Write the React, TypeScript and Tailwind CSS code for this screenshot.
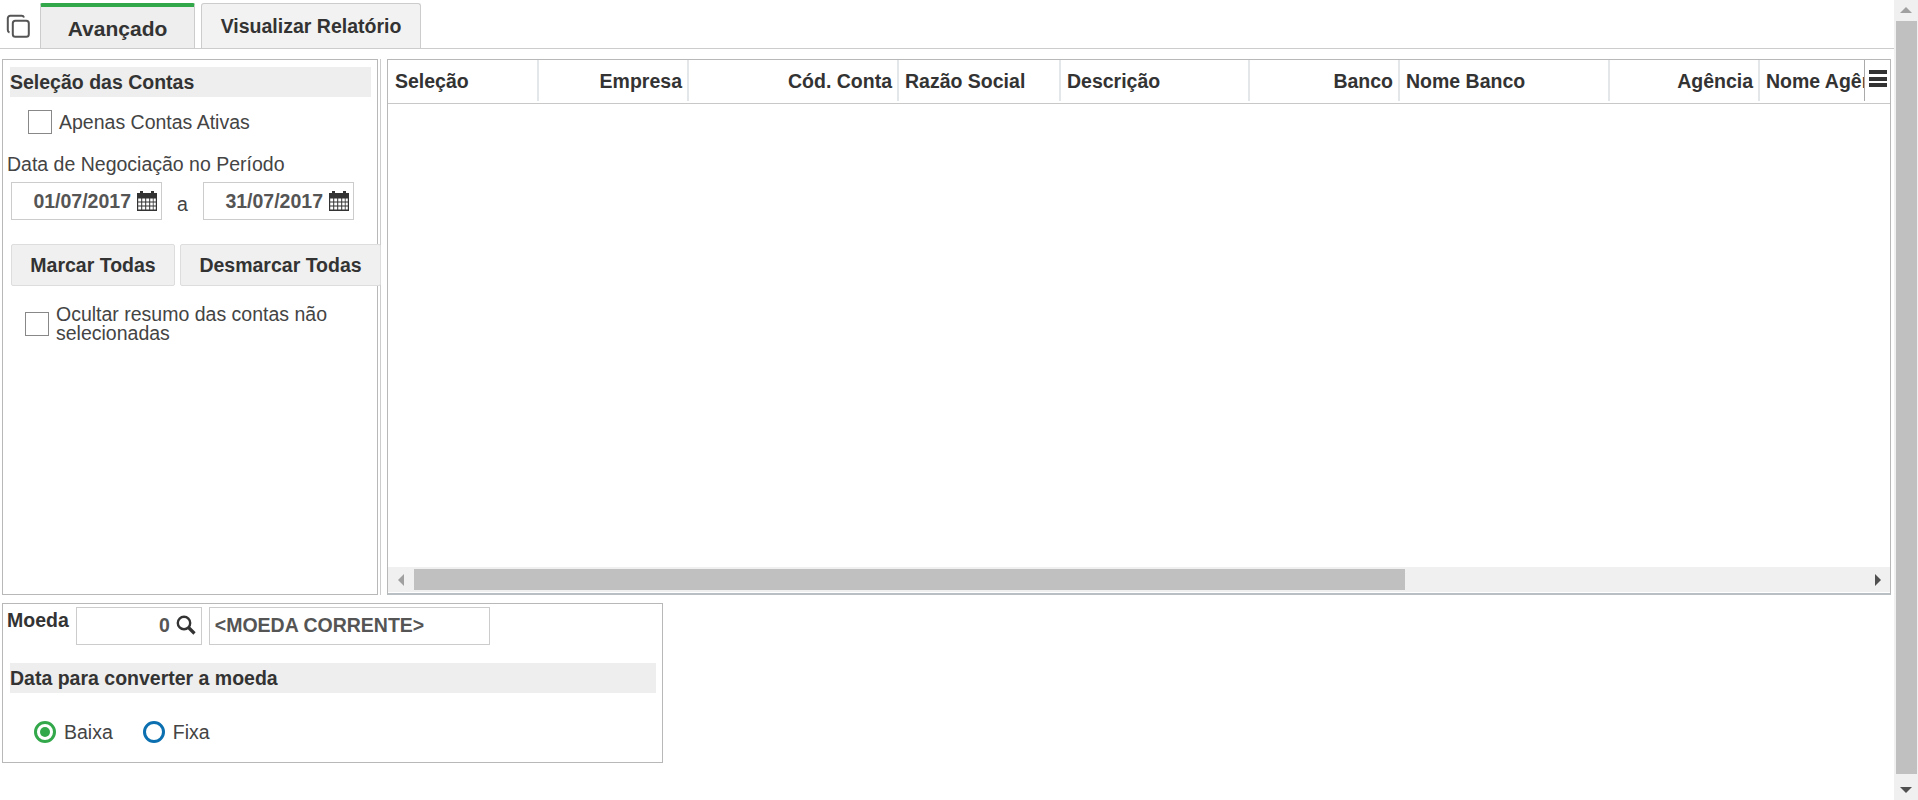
const columns = [
  { title: 'Seleção', width: 'w-[150px]', right: false },
  { title: 'Empresa', width: 'w-[150px]', right: true },
  { title: 'Cód. Conta', width: 'w-[210px]', right: true },
  { title: 'Razão Social', width: 'w-[162px]', right: false },
  { title: 'Descrição', width: 'w-[189px]', right: false },
  { title: 'Banco', width: 'w-[150px]', right: true },
  { title: 'Nome Banco', width: 'w-[210px]', right: false },
  { title: 'Agência', width: 'w-[150px]', right: true },
];

const CopyIcon = () => (
  <svg width="24" height="24" viewBox="0 0 24 24" fill="none" stroke="#555" strokeWidth="2" className="shrink-0">
    <rect x="6.8" y="6.8" width="16" height="16" rx="2.5" />
    <path d="M3.5 18.5 A2.5 2.5 0 0 1 1.8 16 V4.3 A2.5 2.5 0 0 1 4.3 1.8 H15.5 A2.5 2.5 0 0 1 18 3.5" />
  </svg>
);

const CalendarIcon = () => (
  <svg width="20" height="20" viewBox="0 0 20 20" fill="#333" className="shrink-0">
    <rect x="3" y="0" width="3" height="4" />
    <rect x="14" y="0" width="3" height="4" />
    <path
      d="M0 2h20v18H0z M1.2 7.5v3h3v-3z M5.2 7.5v3h3v-3z M9.2 7.5v3h3v-3z M13.2 7.5v3h2.6v-3z M16.6 7.5v3h2.2v-3z M1.2 11.5v3h3v-3z M5.2 11.5v3h3v-3z M9.2 11.5v3h3v-3z M13.2 11.5v3h2.6v-3z M16.6 11.5v3h2.2v-3z M1.2 15.5v3h3v-3z M5.2 15.5v3h3v-3z M9.2 15.5v3h3v-3z M13.2 15.5v3h2.6v-3z M16.6 15.5v3h2.2v-3z"
      fillRule="evenodd"
    />
  </svg>
);

const SearchIcon = () => (
  <svg width="20" height="20" viewBox="0 0 20 20" fill="none" stroke="#333" className="shrink-0">
    <circle cx="8" cy="8" r="6.2" strokeWidth="2.4" />
    <path d="M12.5 12.5 L18.5 18.5" strokeWidth="3.2" />
  </svg>
);

const DateField = ({ value }: { value: string }) => (
  <div className="flex h-[38px] w-[151px] items-center justify-end gap-[6px] border border-[#ccc] pr-[4px]">
    <span className="font-bold text-[#555]">{value}</span>
    <CalendarIcon />
  </div>
);

const Radio = ({ label, checked }: { label: string; checked: boolean }) => (
  <label className="flex items-center gap-[8px] leading-[24px] text-[#444]">
    <span
      className={
        checked
          ? 'flex h-[22px] w-[22px] items-center justify-center rounded-full border-[3px] border-[#33a84b]'
          : 'h-[22px] w-[22px] rounded-full border-[3px] border-[#0b6fb0]'
      }
    >
      {checked && <span className="h-[10px] w-[10px] rounded-full bg-[#33a84b]" />}
    </span>
    {label}
  </label>
);

export default function App() {
  return (
    <div className="flex h-[800px] overflow-hidden bg-white font-['Liberation_Sans',Arial,sans-serif] text-[19.5px] leading-[24px] text-[#333]">
      <div className="flex min-w-0 flex-1 flex-col">
        {/* abas */}
        <div className="flex h-[49px] items-end border-b border-[#ccc] pl-[6px]">
          <div className="mb-[10px] w-[34px]">
            <CopyIcon />
          </div>
          <div className="flex h-[45px] w-[155px] items-center justify-center rounded-t-[2px] border-x border-[#ccc] border-t-4 border-t-[#33a84b] bg-[#eee] pt-[3px] text-[21px] font-bold">
            Avançado
          </div>
          <div className="ml-[6px] flex h-[45px] w-[220px] items-center justify-center rounded-t-[3px] border-x border-t border-[#ccc] bg-[#f2f2f2] text-[19.5px] font-bold">
            Visualizar Relatório
          </div>
        </div>

        {/* painéis */}
        <div className="mt-[10px] flex h-[536px] pl-[2px]">
          <div className="relative z-10 w-[376px] shrink-0 border border-[#b8b8b8] pl-[7px] pr-[6px] pt-[7px]">
            <h3 className="flex h-[30px] items-center bg-[#eee] font-bold">Seleção das Contas</h3>
            <label className="mt-[13px] flex items-center gap-[7px] pl-[18px] text-[#444]">
              <span className="h-[24px] w-[24px] border border-[#888]" />
              Apenas Contas Ativas
            </label>
            <p className="-ml-[3px] mt-[18px] text-[#444]">Data de Negociação no Período</p>
            <div className="mt-[6px] flex items-center pl-[1px]">
              <DateField value="01/07/2017" />
              <span className="w-[41px] pt-[5px] text-center text-[#444]">a</span>
              <DateField value="31/07/2017" />
            </div>
            <div className="mt-[24px] flex gap-[5px] pl-[1px]">
              <button className="h-[42px] w-[164px] shrink-0 rounded-[2px] border border-[#ddd] bg-[#f0f0f0] font-bold">Marcar Todas</button>
              <button className="h-[42px] w-[201px] shrink-0 rounded-[2px] border border-[#ddd] bg-[#f0f0f0] font-bold">Desmarcar Todas</button>
            </div>
            <label className="mt-[19px] flex items-center gap-[7px] pl-[15px] leading-[19px] text-[#444]">
              <span className="h-[24px] w-[24px] shrink-0 border border-[#888]" />
              <span>
                Ocultar resumo das contas não
                <br />
                selecionadas
              </span>
            </label>
          </div>
          <div className="ml-[2px] w-px shrink-0 bg-[#ccc]" />
          <div className="ml-[6px] flex w-[1504px] min-w-0 flex-col border border-b-2 border-[#b8b8b8] border-b-[#b9bfc2]">
            <div className="flex h-[44px] shrink-0 border-b border-[#c8c8c8] pb-[2px] pl-px">
              {columns.map((col) => (
                <div
                  key={col.title}
                  className={`flex shrink-0 items-center overflow-hidden whitespace-nowrap border-r-2 border-[#e4e7ea] pl-[6px] pr-[5px] font-bold ${col.width} ${
                    col.right ? 'justify-end' : 'justify-start'
                  }`}
                >
                  {col.title}
                </div>
              ))}
              <div className="flex w-[104px] shrink-0 items-center overflow-hidden whitespace-nowrap pl-[6px] font-bold">Nome Agência</div>
              <div className="flex flex-1 justify-center border-l border-[#aaa] pt-[10px]">
                <div className="flex h-[17px] w-[18px] flex-col justify-between">
                  <span className="h-[4px] bg-[#333]" />
                  <span className="h-[4px] bg-[#333]" />
                  <span className="h-[4px] bg-[#333]" />
                </div>
              </div>
            </div>
            <div className="flex-1" />
            <div className="mb-px flex h-[25px] shrink-0 items-center bg-[#f0f0f0] pr-[9px]">
              <span className="ml-[10px] h-0 w-0 border-y-[6px] border-r-[6px] border-y-transparent border-r-[#a0a0a0]" />
              <div className="ml-[10px] h-[21px] w-[991px] bg-[#c0c0c0]" />
              <span className="ml-auto h-0 w-0 border-y-[6px] border-l-[6px] border-y-transparent border-l-[#505050]" />
            </div>
          </div>
        </div>

        {/* moeda */}
        <div className="ml-[2px] mt-[8px] h-[160px] w-[661px] border border-[#b8b8b8] pl-[7px] pr-[6px] pt-[3px]">
          <div className="flex items-start">
            <span className="-ml-[3px] mt-px font-bold">Moeda</span>
            <div className="ml-[7px] flex h-[38px] w-[126px] items-center justify-end gap-[6px] border border-[#ccc] pb-[2px] pr-[5px]">
              <span className="font-bold text-[#555]">0</span>
              <SearchIcon />
            </div>
            <div className="ml-[7px] flex h-[38px] w-[281px] items-center border border-[#ccc] pb-[2px] pl-[5px] font-bold text-[#555]">
              &lt;MOEDA CORRENTE&gt;
            </div>
          </div>
          <h3 className="mt-[18px] flex h-[30px] items-center bg-[#eee] font-bold">Data para converter a moeda</h3>
          <div className="mt-[27px] flex gap-[30px] pl-[24px]">
            <Radio label="Baixa" checked />
            <Radio label="Fixa" checked={false} />
          </div>
        </div>
      </div>

      {/* barra de rolagem da página */}
      <div className="flex w-[24px] shrink-0 flex-col items-center bg-[#f0f0f0]">
        <span className="mt-[7px] h-0 w-0 border-x-[6px] border-b-[6px] border-x-transparent border-b-[#a0a0a0]" />
        <div className="mt-[8px] h-[753px] w-[21px] bg-[#c0c0c0]" />
        <span className="mt-[13px] h-0 w-0 border-x-[6px] border-t-[6px] border-x-transparent border-t-[#505050]" />
      </div>
    </div>
  );
}
